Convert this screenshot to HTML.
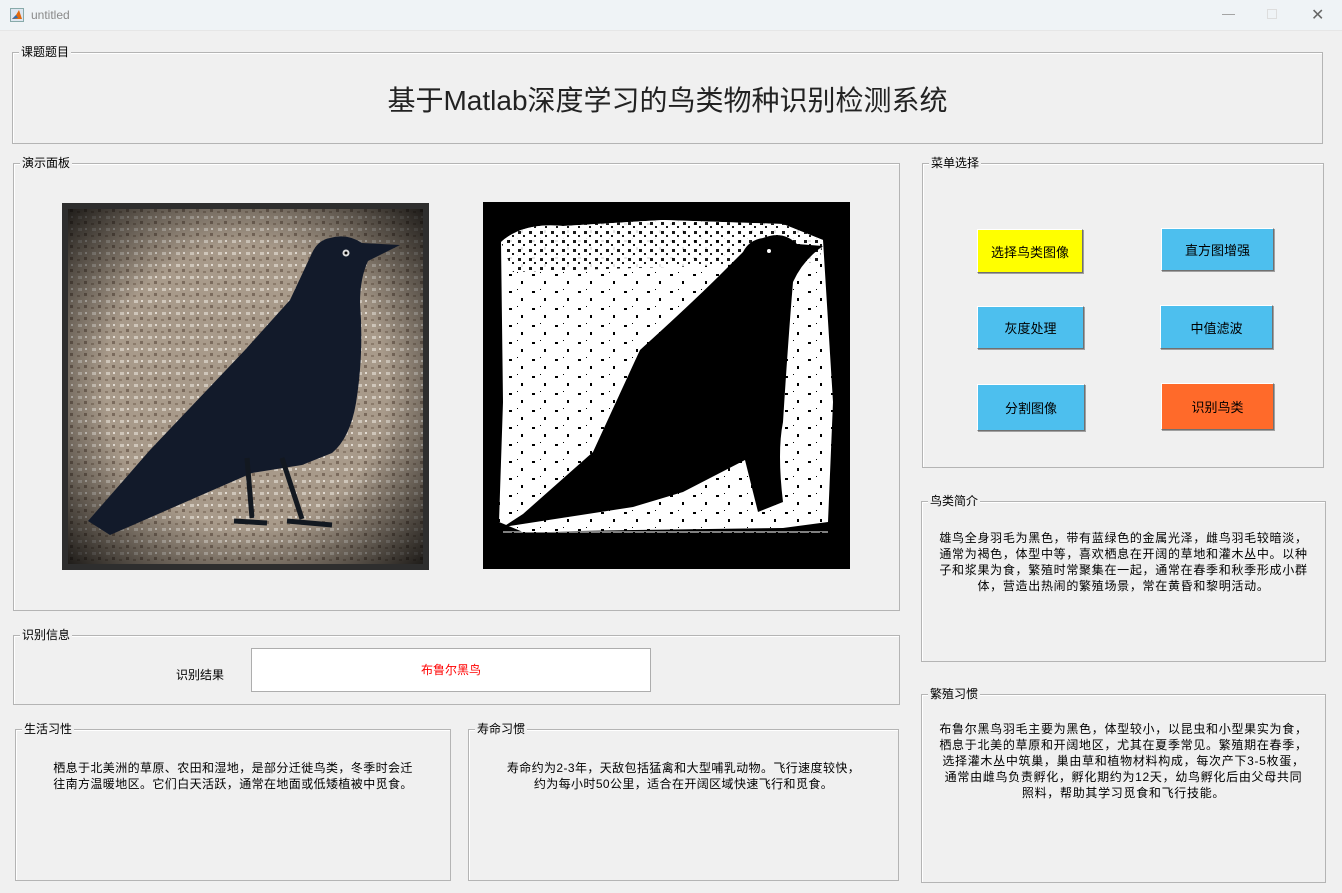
<!DOCTYPE html>
<html><head><meta charset="utf-8"><style>
*{margin:0;padding:0;box-sizing:border-box}
body{width:1342px;height:893px;background:#f0f0f0;font-family:"Liberation Sans","Noto Sans CJK SC",sans-serif;font-size:12px;color:#000;position:relative;overflow:hidden}
.tb{position:absolute;left:0;top:0;width:1342px;height:31px;background:#eff3f6;border-bottom:1px solid #e6e6e6}
.tb .t{position:absolute;left:31px;top:8px;color:#8a8a8a;font-size:12px}
.p{position:absolute;border:1px solid #b4b4b4;box-shadow:inset 1px 1px 0 #fff}
.p .l{position:absolute;left:6px;top:-8px;background:#f0f0f0;padding:0 2px;font-size:12px;line-height:14px}
.txt{position:absolute;left:0;right:0;text-align:center;line-height:16px;font-size:12px;white-space:nowrap;letter-spacing:0.7px}
.b{position:absolute;border:1px solid;border-color:#fff #707070 #707070 #fff;display:flex;align-items:center;justify-content:center;font-size:13px;box-shadow:1px 1px 0 #a0a0a0}
</style></head><body>
<div class="tb">
<svg style="position:absolute;left:10px;top:8px" width="14" height="14"><rect x="0.5" y="0.5" width="13" height="13" fill="#dde6f0" stroke="#8aa"/><path d="M2 11 L6 7 L9 2 L12 11 Z" fill="#e06a10"/><path d="M2 11 L6 7 L8 10Z" fill="#2a6fb5"/></svg>
<span class="t">untitled</span>
<span style="position:absolute;left:1222px;top:6px;color:#999;font-size:13px">—</span>
<span style="position:absolute;left:1267px;top:9px;width:10px;height:10px;border:1px solid #ddd"></span>
<span style="position:absolute;left:1311px;top:5px;color:#666;font-size:16px">✕</span>
</div>

<div class="p" style="left:12px;top:52px;width:1311px;height:92px"><span class="l">课题题目</span>
<div style="position:absolute;left:0;right:0;top:26px;text-align:center;font-size:28px;color:#222">基于Matlab深度学习的鸟类物种识别检测系统</div></div>

<div class="p" style="left:13px;top:163px;width:887px;height:448px"><span class="l">演示面板</span></div>

<svg style="position:absolute;left:62px;top:203px" width="367" height="367">
<defs><radialGradient id="v" cx="50%" cy="50%" r="72%"><stop offset="55%" stop-color="#000" stop-opacity="0"/><stop offset="100%" stop-color="#000" stop-opacity="0.85"/></radialGradient>
<pattern id="g" width="14" height="12" patternUnits="userSpaceOnUse"><rect width="14" height="12" fill="#a89a8a"/><rect x="2" y="1" width="4" height="3" fill="#cfc6ba"/><rect x="8" y="6" width="3" height="3" fill="#7a6a5c"/><rect x="9" y="1" width="2" height="2" fill="#e2dbd2"/><rect x="1" y="8" width="3" height="2" fill="#8b7b6b"/></pattern></defs>
<rect width="367" height="367" fill="#2e2e2e"/>
<rect x="6" y="6" width="355" height="355" fill="url(#g)"/>
<rect x="6" y="6" width="355" height="355" fill="url(#v)"/>
<path d="M268,35 Q285,30 300,40 L338,42 L306,58 Q298,75 298,100 Q302,150 294,200 Q288,235 270,250 L240,262 L190,270 L48,332 L26,318 L88,247 L183,147 L228,97 L250,50 Q256,37 268,35 Z" fill="#121a2a"/>
<path d="M185,255 L190,315 M220,255 L240,316 M172,318 L205,320 M225,318 L270,322" stroke="#121820" stroke-width="5" fill="none"/>
<circle cx="284" cy="50" r="3.5" fill="#ddd"/><circle cx="284" cy="50" r="1.5" fill="#000"/>
</svg>

<svg style="position:absolute;left:483px;top:202px" width="367" height="367">
<defs><pattern id="n" width="23" height="17" patternUnits="userSpaceOnUse"><rect width="23" height="17" fill="#fff"/><rect x="3" y="4" width="3" height="2" fill="#000"/><rect x="15" y="11" width="2" height="3" fill="#000"/><rect x="11" y="2" width="1" height="1" fill="#000"/></pattern>
<pattern id="n2" width="11" height="9" patternUnits="userSpaceOnUse"><rect width="11" height="9" fill="#fff"/><rect x="2" y="2" width="3" height="3" fill="#000"/><rect x="7" y="6" width="2" height="2" fill="#000"/></pattern></defs>
<rect width="367" height="367" fill="#000"/>
<path d="M18,40 Q40,20 80,24 L180,18 L300,22 L340,38 L350,200 L345,320 L300,326 L150,328 L40,330 L16,320 L20,200 Z" fill="url(#n)"/>
<path d="M18,40 Q40,20 80,24 L180,18 L300,22 L340,38 L336,60 L30,70 Z" fill="url(#n2)" opacity="0.9"/>
<path d="M280,36 Q300,28 314,42 L340,44 Q320,58 310,80 Q305,140 300,220 Q294,250 300,300 L275,310 L262,258 L200,290 L150,305 L20,325 L40,312 L110,250 L157,148 Q210,100 240,70 L260,50 Q266,38 280,36 Z" fill="#000"/>
<path d="M20,330 L345,330" stroke="url(#n2)" stroke-width="1"/>
<circle cx="286" cy="49" r="2" fill="#fff"/>
</svg>

<div class="p" style="left:922px;top:163px;width:402px;height:305px"><span class="l">菜单选择</span></div>
<div class="b" style="left:977px;top:229px;width:106px;height:44px;background:#ffff00">选择鸟类图像</div>
<div class="b" style="left:1161px;top:228px;width:113px;height:43px;background:#4dbfee">直方图增强</div>
<div class="b" style="left:977px;top:306px;width:107px;height:43px;background:#4dbfee">灰度处理</div>
<div class="b" style="left:1160px;top:305px;width:113px;height:44px;background:#4dbfee">中值滤波</div>
<div class="b" style="left:977px;top:384px;width:108px;height:47px;background:#4dbfee">分割图像</div>
<div class="b" style="left:1161px;top:383px;width:113px;height:47px;background:#ff6a2a">识别鸟类</div>

<div class="p" style="left:921px;top:501px;width:405px;height:161px"><span class="l">鸟类简介</span>
<div class="txt" style="top:28px">雄鸟全身羽毛为黑色，带有蓝绿色的金属光泽，雌鸟羽毛较暗淡，<br>通常为褐色，体型中等，喜欢栖息在开阔的草地和灌木丛中。以种<br>子和浆果为食，繁殖时常聚集在一起，通常在春季和秋季形成小群<br>体，营造出热闹的繁殖场景，常在黄昏和黎明活动。</div></div>

<div class="p" style="left:921px;top:694px;width:405px;height:189px"><span class="l">繁殖习惯</span>
<div class="txt" style="top:26px">布鲁尔黑鸟羽毛主要为黑色，体型较小，以昆虫和小型果实为食，<br>栖息于北美的草原和开阔地区，尤其在夏季常见。繁殖期在春季，<br>选择灌木丛中筑巢，巢由草和植物材料构成，每次产下3-5枚蛋，<br>通常由雌鸟负责孵化，孵化期约为12天，幼鸟孵化后由父母共同<br>照料，帮助其学习觅食和飞行技能。</div></div>

<div class="p" style="left:13px;top:635px;width:887px;height:70px"><span class="l">识别信息</span>
<span style="position:absolute;left:162px;top:30px">识别结果</span>
<div style="position:absolute;left:237px;top:12px;width:400px;height:44px;background:#fff;border:1px solid #adadad;color:#f00;text-align:center;line-height:42px">布鲁尔黑鸟</div></div>

<div class="p" style="left:15px;top:729px;width:436px;height:152px"><span class="l">生活习性</span>
<div class="txt" style="top:30px;letter-spacing:0.4px">栖息于北美洲的草原、农田和湿地，是部分迁徙鸟类，冬季时会迁<br>往南方温暖地区。它们白天活跃，通常在地面或低矮植被中觅食。</div></div>

<div class="p" style="left:468px;top:729px;width:431px;height:152px"><span class="l">寿命习惯</span>
<div class="txt" style="top:30px;letter-spacing:0.4px">寿命约为2-3年，天敌包括猛禽和大型哺乳动物。飞行速度较快，<br>约为每小时50公里，适合在开阔区域快速飞行和觅食。</div></div>
</body></html>
